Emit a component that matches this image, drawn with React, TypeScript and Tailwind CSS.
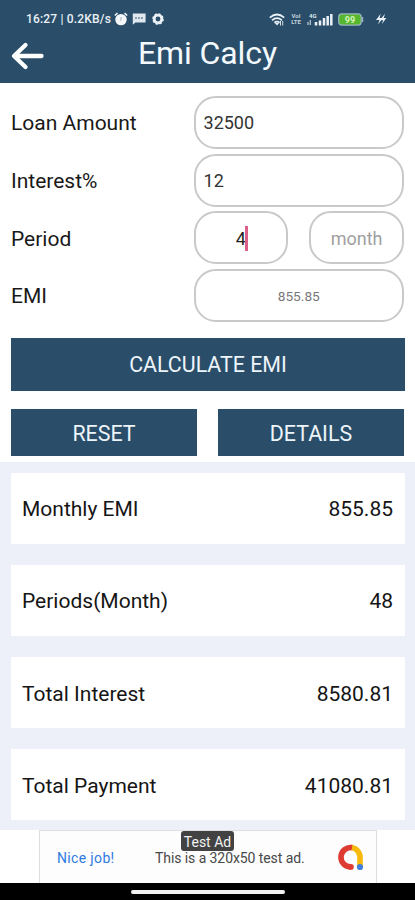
import React from 'react';

const field = 'flex h-[53px] items-center rounded-[22px] border-2 border-[#c9c9c9] bg-white';

function StatusBar() {
  return (
    <div className="flex h-[38px] items-center pl-[26px] text-[12px] font-medium leading-none text-[#e9f0f6]">
      <span className="w-[88px] whitespace-nowrap tracking-[0.18px]">16:27 | 0.2KB/s</span>
      <svg className="h-[14px] w-[14px]" viewBox="0 0 14 14">
        <circle cx="7" cy="7.6" r="5.7" fill="#f3f7fa" />
        <path d="M.8 3.5 3.5 1.2M13.2 3.5 10.5 1.2" stroke="#f3f7fa" strokeWidth="1.6" />
        <path d="M7 5v2.8L5.8 8.8" stroke="#9aa8b3" strokeWidth=".9" fill="none" />
      </svg>
      <svg className="ml-[4px] h-[12px] w-[14px]" viewBox="0 0 14 12">
        <path d="M.8.5h12.8v9H3.4L.8 11.8Z" fill="#dfe8ef" />
        <path d="M3 5h8.6" stroke="#6f8799" strokeWidth="1.5" strokeDasharray="2 1" />
      </svg>
      <svg className="ml-[6px] h-[12px] w-[12px]" viewBox="0 0 12 12">
        <circle cx="6" cy="6" r="3.8" fill="none" stroke="#e9f0f6" strokeWidth="2.8" />
        <circle cx="6" cy="6" r="5" fill="none" stroke="#e9f0f6" strokeWidth="1.6" strokeDasharray="2.2 1.7" />
      </svg>
      <svg className="ml-[105px] h-[13px] w-[16px]" viewBox="0 0 16 13">
        <g fill="none" stroke="#e9f0f6" strokeWidth="1.7">
          <path d="M.8 4.6Q8-1.6 15.2 4.6M3 7.3q5-4.2 10 0M5.3 9.7q2.7-2.2 5.4 0" />
        </g>
        <path d="m5.8 10 2.2 2.6L10.2 10Z" fill="#e9f0f6" />
        <path d="M11.5 8v4.5M13.7 8v4.5" stroke="#e9f0f6" strokeWidth=".9" />
      </svg>
      <div className="ml-[5px] w-[12px] text-center text-[6px] font-bold leading-[6px] text-[#c5d2dc]">
        <div>VoI</div>
        <div>LTE</div>
      </div>
      <svg className="ml-[5px] h-[13px] w-[26px]" viewBox="0 0 26 13">
        <text x="2" y="5" fontSize="6" fontWeight="700" fill="#dfe8ef">4G</text>
        <path d="M1 12V9M3.3 12V7" stroke="#b5c4d0" strokeWidth="1.3" />
        <path d="M9 12.5V9M13 12.5V7.4M17 12.5V5M20.7 12.5V3M24.3 12.5V1" stroke="#e9f0f6" strokeWidth="2.5" />
      </svg>
      <svg className="ml-[5px] h-[13px] w-[26px]" viewBox="0 0 26 13">
        <rect x=".7" y=".9" width="22.5" height="11.2" rx="3" fill="#56b72e" stroke="#9db4c2" strokeWidth="1.2" />
        <path d="M24.5 4v5" stroke="#9db4c2" strokeWidth="1.4" />
        <text x="12" y="9.7" textAnchor="middle" fontSize="9" fontWeight="700" fill="#d9f5bf">99</text>
      </svg>
      <svg className="ml-[11px] h-[12px] w-[12px]" viewBox="0 0 12 12">
        <path d="M5.7.8 1 7h3.5L3 11.5 6.2 7.3h2L6.8 11.3 11.3 5H8.7L10 .8 6.5 5H4.600Z" fill="#e9f0f6" />
      </svg>
    </div>
  );
}

function Label({ children }: { children: React.ReactNode }) {
  return <div className="w-[183px] pt-[3px] text-[21px] text-[#191919]">{children}</div>;
}

function ResultCard({ label, value }: { label: string; value: string }) {
  return (
    <div className="flex h-[71px] items-center justify-between bg-white pl-[11.5px] pr-[11.5px] pt-[4px] text-[21px] text-[#151515]">
      <span>{label}</span>
      <span>{value}</span>
    </div>
  );
}

export default function App() {
  return (
    <div className="h-[900px] w-[415px] overflow-hidden bg-white font-['Roboto',sans-serif]">
      <header className="h-[83px] bg-[#2a4e69]">
        <StatusBar />
        <div className="flex h-[32px] items-center pl-[10px]">
          <svg className="mt-[4px] h-[30px] w-[35px] shrink-0" viewBox="0 0 35 30">
            <path d="M15.5 4 4 15l11.5 11M5 15h26.5" fill="none" stroke="#fff" strokeWidth="4.3" strokeLinecap="round" strokeLinejoin="round" />
          </svg>
          <h1 className="-mt-[2px] ml-[93px] whitespace-nowrap text-[32px] leading-none tracking-[-0.1px] text-[#f4f9fd]">Emi Calcy</h1>
        </div>
      </header>

      <main>
        <section className="h-[379px] px-[11px] pt-[13px]">
          <div className="flex flex-col gap-[4.7px]">
            <div className="flex items-center">
              <Label>Loan Amount</Label>
              <div className={`${field} w-[211px] pl-[8px] text-[18px] text-[#333]`}>32500</div>
            </div>
            <div className="flex items-center">
              <Label>Interest%</Label>
              <div className={`${field} w-[211px] pl-[8px] text-[18px] text-[#333]`}>12</div>
            </div>
            <div className="flex items-center">
              <Label>Period</Label>
              <div className={`${field} w-[95px] justify-center pl-[2px] pt-px text-[18px] text-[#222]`}>
                <span>4</span>
                <span className="-ml-px h-[25px] w-[3px] bg-[#dc5f88]" />
              </div>
              <div className={`${field} ml-[21px] w-[95px] justify-center pt-[2px] text-[18px] text-[#a0a0a0]`}>month</div>
            </div>
            <div className="flex items-center">
              <Label>EMI</Label>
              <div className={`${field} w-[211px] justify-center pt-px text-[13.7px] text-[#777]`}>855.85</div>
            </div>
          </div>
          <button className="mt-[15.5px] block h-[53px] w-[394px] bg-[#2a4e69] pt-[2px] text-[21.4px] text-[#edf4fa]">CALCULATE EMI</button>
          <div className="mt-[18.500px] flex gap-[21px] text-[21.4px] text-[#edf4fa]">
            <button className="h-[47px] flex-1 bg-[#2a4e69] pt-[2px]">RESET</button>
            <button className="h-[47px] flex-1 bg-[#2a4e69] pt-[2px]">DETAILS</button>
          </div>
        </section>

        <section className="flex h-[368px] flex-col gap-[21.2px] bg-[#edf0f9] px-[10.5px] pt-[10.5px]">
          <ResultCard label="Monthly EMI" value="855.85" />
          <ResultCard label="Periods(Month)" value="48" />
          <ResultCard label="Total Interest" value="8580.81" />
          <ResultCard label="Total Payment" value="41080.81" />
        </section>
      </main>

      <div className="h-[53px] pl-[39px]">
        <div className="relative flex h-[53px] w-[338px] items-center border-x border-t border-[#dedee0] bg-[#fdfdfd]">
          <span className="w-[115px] pl-[17px] pt-[2px] text-[14px] tracking-[0.35px] text-[#2f7be0]">Nice job!</span>
          <span className="whitespace-nowrap pt-[2px] text-[14px] tracking-[-0.08px] text-[#484848]">This is a 320x50 test ad.</span>
          <span className="absolute left-[141px] top-0 h-[20px] w-[53px] rounded-[3px] bg-[#424242] pt-px text-center text-[14px] leading-[20px] text-[#f2f2f2]">Test Ad</span>
          <svg className="absolute left-[297px] top-[12px] h-[29px] w-[28px]" viewBox="0 0 28 29">
            <g fill="none" strokeWidth="5.6">
              <path d="M13.500 4.500A9.600 9.600 0 0 1 23 14.100V24" stroke="#f6b90d" />
              <path d="M15 4.600A9.700 9.700 0 1 0 14 23.900" stroke="#de3c32" />
            </g>
            <circle cx="14" cy="23.900" r="2.800" fill="#de3c32" />
            <circle cx="23" cy="24" r="3.100" fill="#437fdd" />
          </svg>
        </div>
      </div>
      <footer className="flex h-[17px] justify-center bg-black pt-[7px]">
        <div className="h-[4px] w-[154px] rounded-full bg-[#f2f2f2]" />
      </footer>
    </div>
  );
}
